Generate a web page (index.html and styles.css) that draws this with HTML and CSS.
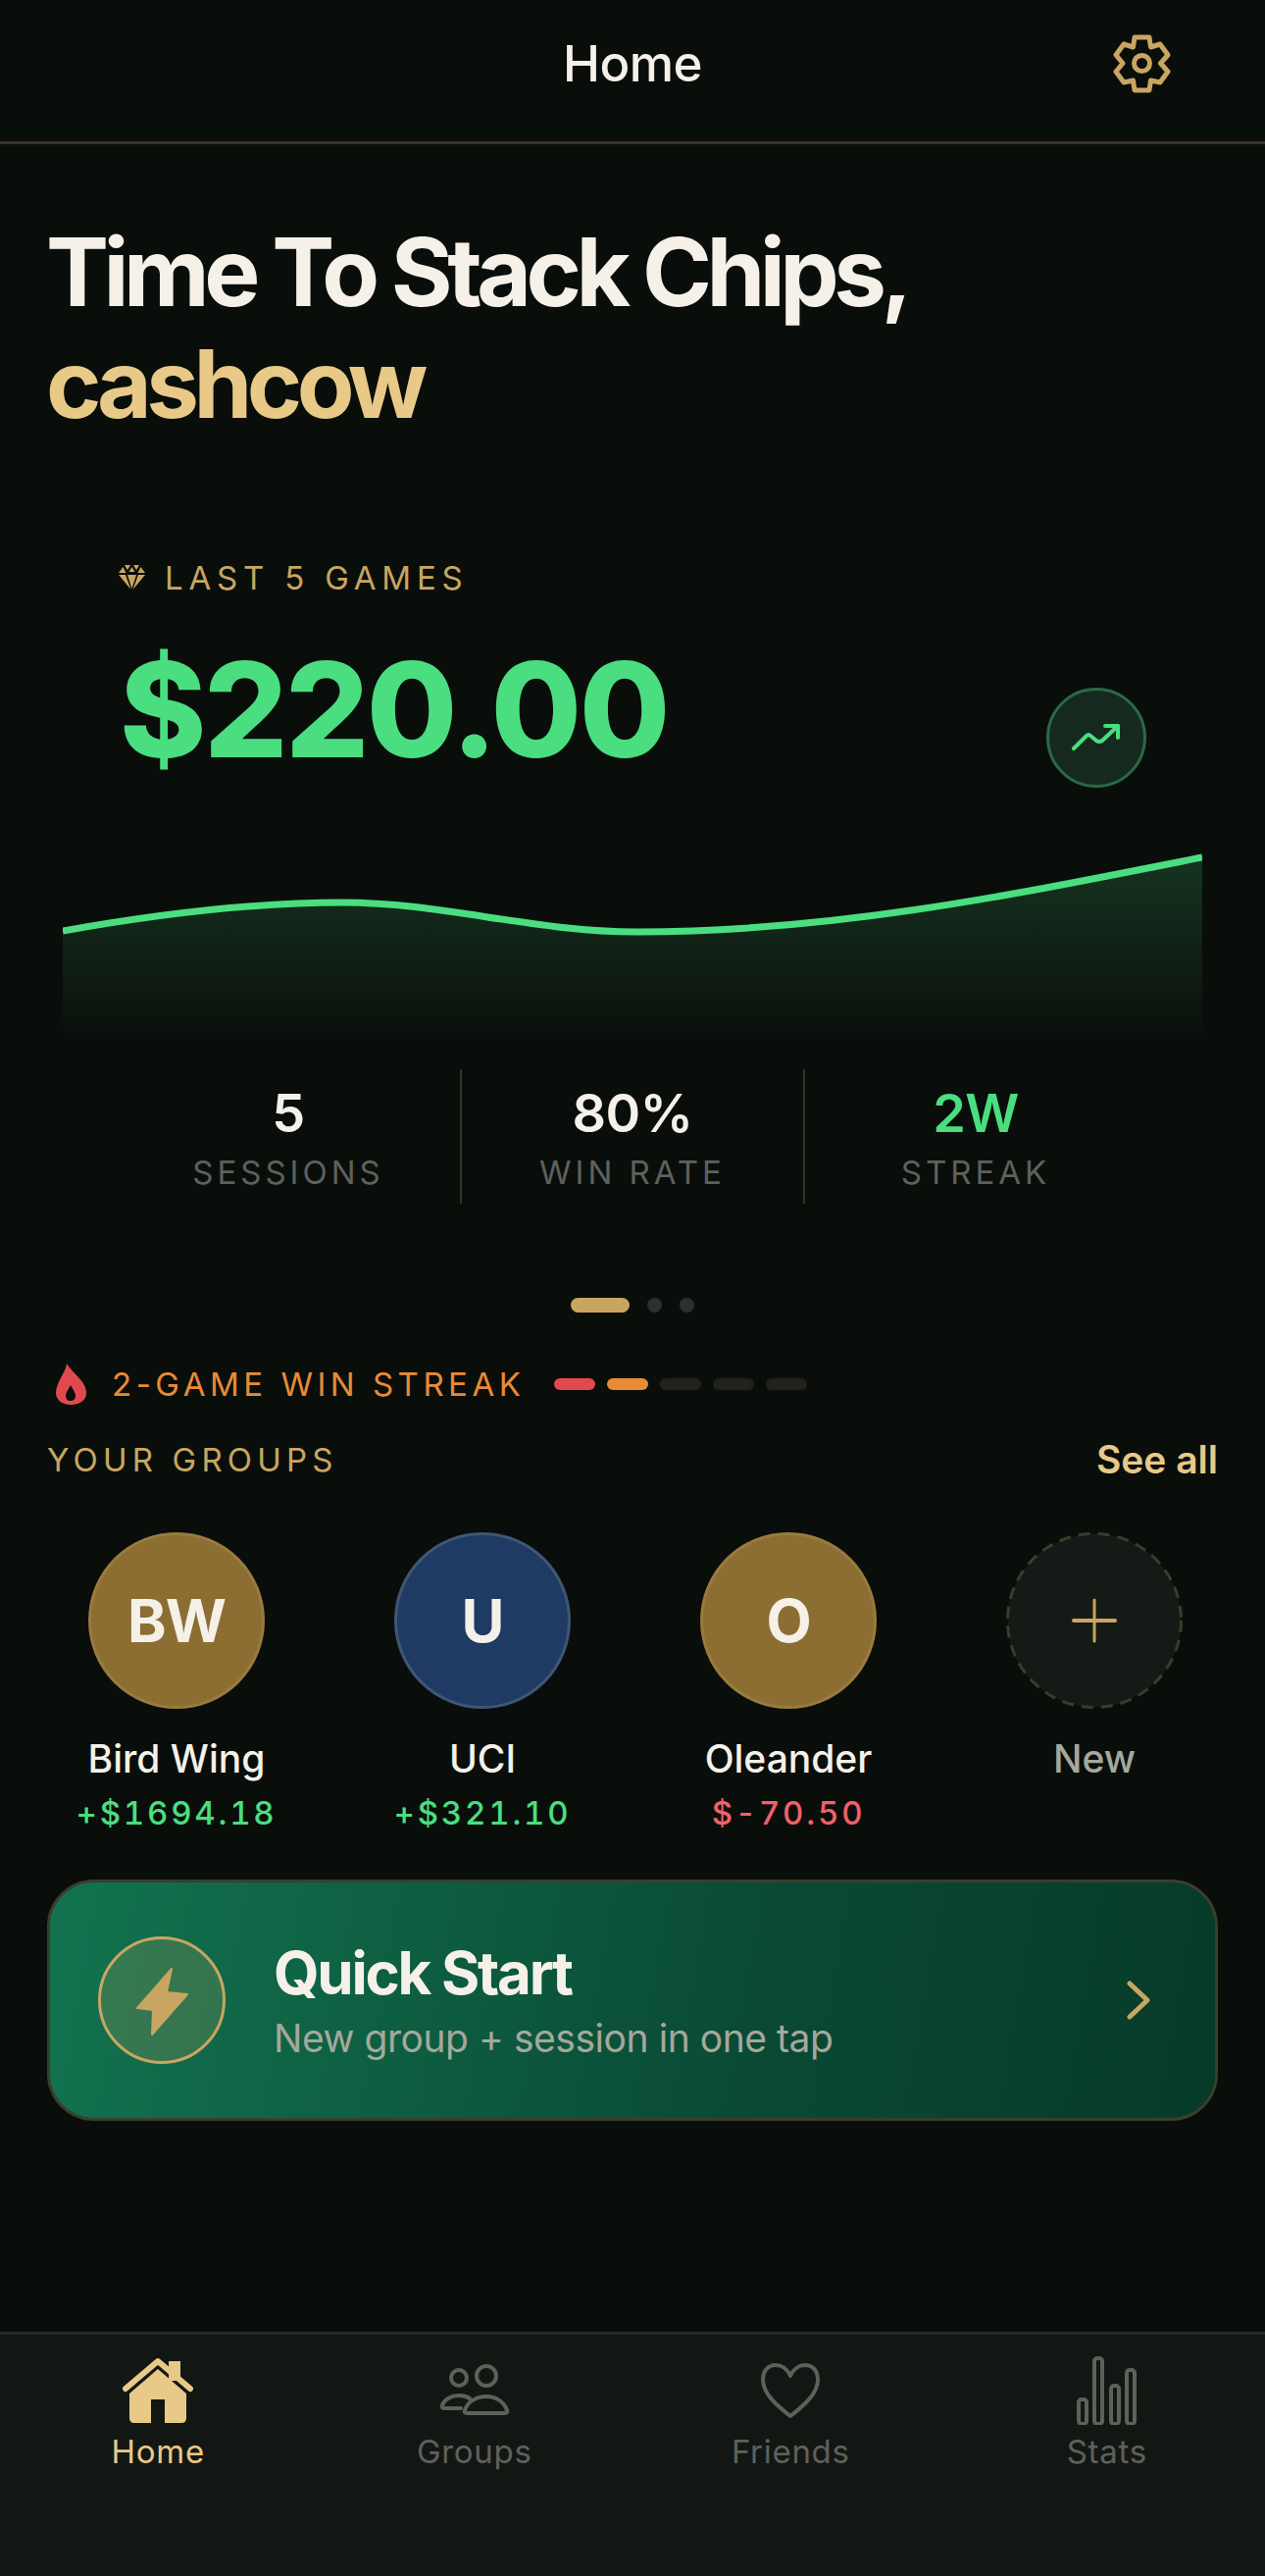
FILE: index.html
```html
<!DOCTYPE html>
<html lang="en">
<head>
    <meta charset="UTF-8">
    <meta name="viewport" content="width=device-width, initial-scale=1.0">
    <title>Home</title>
    <link rel="stylesheet" href="styles.css">
</head>
<body>

<header class="top-bar">
    <span></span>
    <h2 class="top-title">Home</h2>
    <svg class="gear" width="60" height="60" viewBox="0 0 60 60" fill="none" stroke="#c8a662" stroke-width="5" stroke-linejoin="round">
        <path d="M22 3H37L38.500 13L48 10L56 21L48.500 29.500L56 38L48 49L38.500 47L37 57H22L20.500 47L11 49L3 38L10 29.500L3 21L11 10L20.500 13Z"/>
        <circle cx="29.500" cy="29.500" r="8"/>
    </svg>
</header>

<h1 class="greeting">Time To Stack Chips,<br><span class="greeting-name">cashcow</span></h1>

<div class="eyebrow">
    <svg width="27" height="27" viewBox="0 0 27 27" fill="#c8a662">
        <polygon points="6,0 12,0 9,5"/>
        <polygon points="15,0 21,0 18,5"/>
        <polygon points="13.500,2 16.500,7 10.500,7"/>
        <polygon points="4.500,2 7.500,8 0,8"/>
        <polygon points="22.500,2 27,8 19.500,8"/>
        <polygon points="0,10 7,10 12.500,25"/>
        <polygon points="9,10 18,10 13.500,24"/>
        <polygon points="20,10 27,10 14.500,25"/>
    </svg>
    <span>LAST 5 GAMES</span>
</div>

<div class="amount-row">
    <div class="amount">$220.00</div>
    <div class="trend">
        <svg width="96" height="96" viewBox="0 0 96 96" fill="none" stroke="#4ade80" stroke-width="4" stroke-linecap="round" stroke-linejoin="round">
            <path d="M25 59L38 46Q40 44 42 46L48 51Q51 53 54 51L70 36"/>
            <path d="M57 36H70V48"/>
        </svg>
    </div>
</div>

<svg class="chart" width="1162" height="192" viewBox="0 0 1162 192">
    <defs>
        <linearGradient id="chartFill" x1="0" y1="0" x2="0" y2="1">
            <stop offset="0" stop-color="#4ade80" stop-opacity="0.18"/>
            <stop offset="1" stop-color="#4ade80" stop-opacity="0"/>
        </linearGradient>
    </defs>
    <path d="M0 79C95 62 190 50 286 50C386 50 480 80 586 80C790 80 980 40 1162 4V192H0Z" fill="url(#chartFill)"/>
    <path d="M0 79C95 62 190 50 286 50C386 50 480 80 586 80C790 80 980 40 1162 4" fill="none" stroke="#4ade80" stroke-width="7"/>
</svg>

<div class="stats">
    <div class="stat">
        <div class="stat-value">5</div>
        <div class="stat-label">SESSIONS</div>
    </div>
    <div class="stat">
        <div class="stat-value">80%</div>
        <div class="stat-label">WIN RATE</div>
    </div>
    <div class="stat">
        <div class="stat-value green">2W</div>
        <div class="stat-label">STREAK</div>
    </div>
</div>

<div class="pager">
    <span class="pager-pill"></span>
    <span class="pager-dot"></span>
    <span class="pager-dot"></span>
</div>

<div class="streak">
    <svg width="31" height="42" viewBox="0 0 31 42" fill="#e04a4e" fill-rule="evenodd">
        <path d="M11 0C10 8 5 13 2 21C0 26 0 29 0 31C1 38 7 42 15 42C24 42 31 38 31 30C31 18 18 11 11 0ZM15 22C12 27 10 30 10 33C10 36 12 38 15 38C18 38 20 36 20 33C20 30 18 27 15 22Z"/>
    </svg>
    <span class="streak-text">2-GAME WIN STREAK</span>
    <div class="streak-bars">
        <span class="bar bar-red"></span>
        <span class="bar bar-orange"></span>
        <span class="bar"></span>
        <span class="bar"></span>
        <span class="bar"></span>
    </div>
</div>

<div class="groups-head">
    <span class="groups-title">YOUR GROUPS</span>
    <span class="see-all">See all</span>
</div>

<div class="groups">
    <div class="group">
        <div class="avatar avatar-gold">BW</div>
        <div class="group-name">Bird Wing</div>
        <div class="group-amount green">+$1694.18</div>
    </div>
    <div class="group">
        <div class="avatar avatar-blue">U</div>
        <div class="group-name">UCI</div>
        <div class="group-amount green">+$321.10</div>
    </div>
    <div class="group">
        <div class="avatar avatar-gold">O</div>
        <div class="group-name">Oleander</div>
        <div class="group-amount red">$-70.50</div>
    </div>
    <div class="group">
        <svg class="avatar-new" width="180" height="180" viewBox="0 0 180 180" stroke-linecap="round">
            <circle cx="90" cy="90" r="88.500" fill="#151a17" stroke="#3f3a2b" stroke-width="3" stroke-linecap="butt" stroke-dasharray="12 8"/>
            <path d="M90 69V111" stroke="#c8a662" stroke-width="3"/>
            <path d="M69 90H111" stroke="#c8a662" stroke-width="4"/>
        </svg>
        <div class="group-name muted">New</div>
    </div>
</div>

<div class="quick">
    <div class="quick-icon">
        <svg width="124" height="124" viewBox="0 0 124 124" fill="#c8a662" stroke="#c8a662" stroke-width="2" stroke-linejoin="round">
            <polygon points="72,30 37,70 53,72 52,97 88,56 67,54"/>
        </svg>
    </div>
    <div class="quick-text">
        <div class="quick-title">Quick Start</div>
        <div class="quick-sub">New group + session in one tap</div>
    </div>
    <svg class="chevron" width="24" height="40" viewBox="0 0 24 40" fill="none" stroke="#c8a662" stroke-width="5" stroke-linecap="round" stroke-linejoin="round">
        <path d="M3 3L21 20L3 37"/>
    </svg>
</div>

<nav class="tabs">
    <div class="tab tab-active">
        <div class="tab-icon">
            <svg width="72" height="68" viewBox="0 0 72 68" fill="#e8c987">
                <path d="M47 4H59V24H47Z"/>
                <path d="M3 32L36 4L69 32" fill="none" stroke="#e8c987" stroke-width="6" stroke-linecap="round" stroke-linejoin="round"/>
                <path d="M36 12L65 37V62Q65 67 60 67H43V43H29V67H12Q7 67 7 62V37Z"/>
            </svg>
        </div>
        <span>Home</span>
    </div>
    <div class="tab">
        <div class="tab-icon">
            <svg width="72" height="54" viewBox="0 0 72 54" fill="none" stroke="#5e615b" stroke-width="4" stroke-linecap="round" stroke-linejoin="round">
                <circle cx="48" cy="12" r="10"/>
                <circle cx="20" cy="14" r="8"/>
                <path d="M28 50H67Q70 50 69 47C66 38 57 33 48 33C38 33 29 38 26 47Q25 50 28 50Z"/>
                <path d="M22 45H5Q2 45 3 42C5 36 12 32 20 32C24 32 28 33 31 35"/>
            </svg>
        </div>
        <span>Groups</span>
    </div>
    <div class="tab">
        <div class="tab-icon">
            <svg width="60" height="56" viewBox="0 0 60 56" fill="none" stroke="#5e615b" stroke-width="4" stroke-linejoin="round">
                <path d="M30 13C27 6 21 2 15 2C7 2 2 8 2 17C2 31 16 43 30 54C44 43 58 31 58 17C58 8 53 2 45 2C39 2 33 6 30 13Z"/>
            </svg>
        </div>
        <span>Friends</span>
    </div>
    <div class="tab">
        <div class="tab-icon">
            <svg width="62" height="70" viewBox="0 0 62 70" fill="none" stroke="#5e615b" stroke-width="4">
                <rect x="2" y="44" width="8" height="25" rx="3"/>
                <rect x="18" y="2" width="8" height="67" rx="3"/>
                <rect x="35" y="30" width="8" height="39" rx="3"/>
                <rect x="51" y="14" width="8" height="55" rx="3"/>
            </svg>
        </div>
        <span>Stats</span>
    </div>
</nav>

</body>
</html>
```

FILE: styles.css
```css
* { margin: 0; padding: 0; box-sizing: border-box; }
body {
    font-family: 'Inter', 'Liberation Sans', sans-serif; background: #0a0e0b; color: #f5f1e8;
    width: 1290px; min-height: 2626px; display: flex; flex-direction: column;
}
.green { color: #4ade80; }
.red { color: #f0616a; }
.muted { color: #a5a89c; }

.top-bar {
    height: 147px; padding-bottom: 14px;
    display: grid; grid-template-columns: 1fr auto 1fr; align-items: center;
    border-bottom: 3px solid #3a3226;
}
.top-title { font-size: 51px; font-weight: 500; line-height: 60px; letter-spacing: -0.5px; }
.gear { justify-self: end; margin-right: 95px; }

.greeting {
    margin-top: 73px; padding-left: 47px;
    font-size: 96px; font-weight: 700; line-height: 114px; letter-spacing: -5.5px;
}
.greeting-name { color: #e8c987; }

.eyebrow {
    margin-top: 121px; padding-left: 121px; height: 40px;
    display: flex; align-items: center; gap: 20px;
    font-size: 33px; line-height: 40px; letter-spacing: 5.8px; color: #c8a662;
}
.amount-row {
    margin-top: 39px; padding: 0 121px 0 122px;
    display: flex; justify-content: space-between; align-items: flex-start;
}
.amount { font-size: 134px; font-weight: 800; line-height: 150px; letter-spacing: -2.5px; color: #4ade80; }
.trend {
    width: 102px; height: 102px; margin-top: 53px;
    border: 3px solid #2a6a45; border-radius: 50%; background: #16291f;
}
.trend svg { display: block; }
.chart { display: block; margin: 67px 0 0 64px; }

.stats {
    margin-top: 28px; padding: 0 121px 0 119px;
    display: grid; grid-template-columns: repeat(3, 1fr);
}
.stat { height: 137px; padding-top: 17px; text-align: center; }
.stat + .stat { border-left: 2px solid #3a3226; }
.stat-value { font-size: 54px; font-weight: 600; line-height: 56px; letter-spacing: -0.5px; }
.stat-label { margin-top: 12px; font-size: 33px; line-height: 40px; letter-spacing: 4px; color: #5e615b; }

.pager { margin-top: 96px; display: flex; justify-content: center; gap: 18px; }
.pager-pill { width: 60px; height: 15px; border-radius: 8px; background: #c8a662; }
.pager-dot { width: 15px; height: 15px; border-radius: 50%; background: #29332d; }

.streak { margin-top: 52px; padding-left: 57px; height: 42px; display: flex; align-items: center; }
.streak-text { margin-left: 26px; font-size: 33px; line-height: 40px; letter-spacing: 4.5px; color: #e98a36; }
.streak-bars { margin-left: 30px; display: flex; gap: 12px; }
.bar { width: 42px; height: 12px; border-radius: 6px; background: #23221a; }
.bar-red { background: #e04a4e; }
.bar-orange { background: #e98a36; }

.groups-head {
    margin-top: 34px; padding: 0 48px; height: 44px;
    display: flex; justify-content: space-between; align-items: center;
}
.groups-title { font-size: 33px; line-height: 40px; letter-spacing: 5.2px; color: #c8a662; }
.see-all { font-size: 39px; font-weight: 600; line-height: 44px; color: #e8c987; }

.groups { margin-top: 52px; padding: 0 18px 0 24px; display: grid; grid-template-columns: repeat(4, 1fr); }
.group { display: flex; flex-direction: column; align-items: center; }
.avatar {
    width: 180px; height: 180px; border-radius: 50%; border: 3px solid transparent;
    display: flex; align-items: center; justify-content: center;
    font-size: 60px; font-weight: 700; letter-spacing: -1px;
}
.avatar-gold { background: #8c6e33; border-color: #9a7a3e; }
.avatar-blue { background: #1f3a63; border-color: #3f5675; }
.avatar-new { display: block; }
.group-name { margin-top: 27px; font-size: 39px; font-weight: 500; line-height: 48px; }
.group-amount {
    margin-top: 11px; font-size: 33px; font-weight: 500; line-height: 40px;
    letter-spacing: 2.8px; font-variant-numeric: tabular-nums;
}

.quick {
    margin: 48px 48px 0; height: 246px; padding: 0 66px 0 49px;
    display: flex; align-items: center;
    border: 3px solid #3a3f2c; border-radius: 48px;
    background: linear-gradient(100deg, #12734f 0%, #0a4a35 60%, #073a28 100%);
}
.quick-icon {
    width: 130px; height: 130px; border: 3px solid #c8a662; border-radius: 50%;
    background: rgba(200, 166, 98, 0.2);
}
.quick-icon svg { display: block; }
.quick-text { margin-left: 49px; flex: 1; }
.quick-title { font-size: 60px; font-weight: 700; line-height: 68px; letter-spacing: -2.25px; }
.quick-sub { margin-top: 10px; font-size: 39px; line-height: 46px; letter-spacing: -0.45px; color: #a5a89c; }

.tabs {
    margin-top: auto; height: 249px; padding-top: 21px;
    display: grid; grid-template-columns: repeat(4, 1fr);
    border-top: 3px solid #252c27; background: #131714;
}
.tab { display: flex; flex-direction: column; align-items: center; font-size: 33px; line-height: 40px; letter-spacing: 0.7px; color: #5e615b; }
.tab-active { color: #e8c987; }
.tab-icon { height: 72px; margin-bottom: 6px; display: flex; align-items: center; }
```
